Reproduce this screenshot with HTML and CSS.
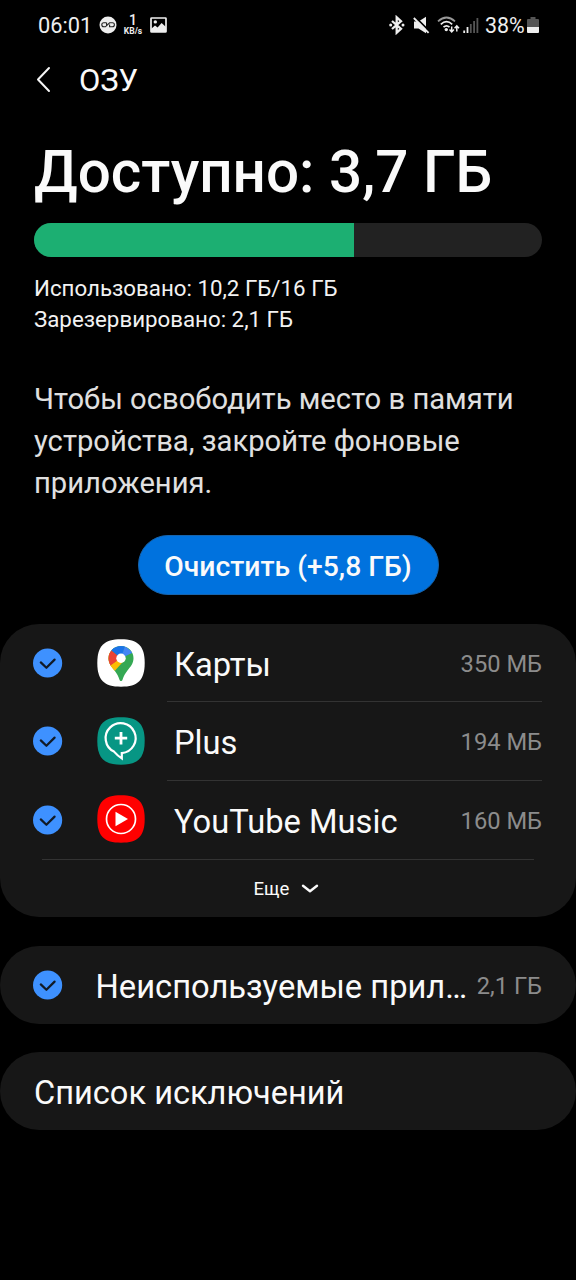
FILE: index.html
```html
<!DOCTYPE html>
<html lang="ru">
<head>
<meta charset="utf-8">
<title>ОЗУ</title>
<link rel="stylesheet" href="styles.css">
</head>
<body>
<svg class="defs" width="0" height="0">
  <symbol id="check" viewBox="0 0 30 30">
    <circle cx="14.600" cy="15" r="14.600" fill="#3e91ff"/>
    <path d="M7.800 14.400l5.600 5.400 8.200-8.200" fill="none" stroke="#111a26" stroke-width="2.200" stroke-linecap="round" stroke-linejoin="round"/>
  </symbol>
</svg>
<div class="status">
  <span class="clock">06:01</span>
  <svg class="st-badge" width="18" height="18" viewBox="0 0 18 18"><circle cx="9" cy="9" r="8.500" fill="#eee"/><g fill="none" stroke="#222" stroke-width="1.100"><path d="M7.600 6.800H4.800a2 2 0 0 0 0 4h1.600L10.600 6.800h2.800a2 2 0 0 1 0 4h-2.800V8.600M7.600 6.800v2.600"/></g></svg>
  <span class="speed"><b>1</b><small>KB/s</small></span>
  <svg class="st-pic" width="17" height="16" viewBox="0 0 17 16"><rect x="1" y="1" width="15" height="14" rx=".6" fill="none" stroke="#eee" stroke-width="1.700"/><circle cx="5.300" cy="4.900" r="1.700" fill="#eee"/><path d="M1 12l4-3.400 2.600 1.800 4-4.400L16 10v5H1z" fill="#eee"/></svg>
  <span class="grow"></span>
  <svg class="st-bt" width="16" height="20" viewBox="0 0 16 20"><path d="M3 6l9 7.800-4.300 3.900V2.300L12 6.200 3 14" fill="none" stroke="#eee" stroke-width="2.300"/><circle cx="1.700" cy="10" r="1.500" fill="#eee"/><circle cx="14" cy="10" r="1.500" fill="#eee"/></svg>
  <svg class="st-mute" width="17" height="18" viewBox="0 0 17 18"><path d="M1 5.500h4.500L13 .8v16.400l-7.500-4.700H1z" fill="#eee"/><path d="M1.800.6L17 15.800" stroke="#000" stroke-width="1.800"/><path d="M.8 2l14.800 14.800" stroke="#eee" stroke-width="1.800"/></svg>
  <svg class="st-wifi" width="23" height="18" viewBox="0 0 23 18"><g fill="none" stroke="#eee" stroke-width="1.700"><path d="M1 5.400Q9.500-2.400 18 5.400" stroke="#999"/><path d="M3.800 8.300Q9.500 3.100 15.200 8.300"/><path d="M6.500 11.200Q9.500 8.400 12.500 11.200"/></g><circle cx="9.300" cy="13.600" r="1.700" fill="#eee"/><path d="M14.700 10.500v5.300m-2.200-2.200l2.200 2.400 2.200-2.400M19.800 15.500v-5.300m-2.200 2l2.200-2.400 2.200 2.400" fill="none" stroke="#eee" stroke-width="1.500"/></svg>
  <svg class="st-sig" width="16" height="17" viewBox="0 0 16 17"><path d="M1.200 13.500V16M4.500 10v6" stroke="#eee" stroke-width="1.800"/><path d="M7.800 7v9M11.100 4v12M14.400 1v15" stroke="#555" stroke-width="1.800"/></svg>
  <span class="percent">38%</span>
  <svg class="st-bat" width="12" height="18" viewBox="0 0 12 18"><path d="M3.500 1h5v2H11a1 1 0 0 1 1 1v8H0V4a1 1 0 0 1 1-1h2.500z" fill="#555"/><path d="M0 11h12v5a1 1 0 0 1-1 1H1a1 1 0 0 1-1-1z" fill="#eee"/></svg>
</div>
<header class="bar">
  <svg width="16" height="28" viewBox="0 0 16 28"><path d="M14 2L3 13.500 14 25" fill="none" stroke="#f5f5f5" stroke-width="2" stroke-linecap="round" stroke-linejoin="round"/></svg>
  <span class="bar-title">ОЗУ</span>
</header>
<main>
  <section class="summary">
    <h1 class="headline">Доступно: 3,7 ГБ</h1>
    <div class="meter"><div class="meter-fill"></div></div>
    <p class="usage"><span class="used">Использовано: 10,2 ГБ/16 ГБ</span><br><span class="reserved">Зарезервировано: 2,1 ГБ</span></p>
    <p class="hint">Чтобы освободить место в памяти<br>устройства, закройте фоновые<br>приложения.</p>
    <button class="clean"><span>Очистить (+5,8 ГБ)</span></button>
  </section>
  <section class="card apps">
    <div class="row">
      <svg class="check" width="30" height="30"><use href="#check"/></svg>
      <svg class="app" width="48" height="48" viewBox="0 0 48 48">
        <defs><clipPath id="pin"><path d="M24 7c-7 0-12.500 5.500-12.500 12.300 0 5.200 3 8.500 6.200 12.500 2.300 3 3.700 5.600 4.700 8.600.7 2.200 2.500 2.200 3.200 0 1-3 2.400-5.600 4.700-8.600 3.200-4 6.200-7.300 6.200-12.500C36.500 12.500 31 7 24 7z"/></clipPath></defs>
        <path d="M24 .3C41 .3 47.700 7 47.700 24S41 47.700 24 47.700.3 41 .3 24 7 .3 24 .3z" fill="#fff"/>
        <g clip-path="url(#pin)">
          <path d="M8 5h32v40H8z" fill="#34a853"/>
          <path d="M24 19.200L8 11v30l7.500-10.500 12.500-15z" fill="#fbbc04"/>
          <path d="M8 8l6.300 3.200L24 19.200 12.500 27.500 8 28z" fill="#ea4335"/>
          <path d="M24 19.200L11.800 27.800 14 36l14.500-16z" fill="#fbbc04"/>
          <path d="M24 19.200L14.300 11.200 12 4h18l-2 4z" fill="#1a73e8"/>
          <path d="M24 19.200L28 7l8 6.500z" fill="#4285f4"/>
        </g>
        <circle cx="24" cy="19.200" r="4.700" fill="#fff"/>
      </svg>
      <div class="row-body"><span class="name">Карты</span><span class="size">350 МБ</span></div>
    </div>
    <div class="row">
      <svg class="check" width="30" height="30"><use href="#check"/></svg>
      <svg class="app" width="48" height="48" viewBox="0 0 48 48"><path d="M24 .3C41 .3 47.700 7 47.700 24S41 47.700 24 47.700.3 41 .3 24 7 .3 24 .3z" fill="#079684"/><path d="M17 34.600A15 15 0 1 1 24.800 36.100V41.400Q20.500 38.600 17 34.600z" fill="none" stroke="#fff" stroke-width="2.200"/><path d="M24 15v12.400M17.800 21.200h12.400" stroke="#fff" stroke-width="2.800"/></svg>
      <div class="row-body"><span class="name">Plus</span><span class="size">194 МБ</span></div>
    </div>
    <div class="row">
      <svg class="check" width="30" height="30"><use href="#check"/></svg>
      <svg class="app" width="48" height="48" viewBox="0 0 48 48"><path d="M24 .3C41 .3 47.700 7 47.700 24S41 47.700 24 47.700.3 41 .3 24 7 .3 24 .3z" fill="#f00"/><circle cx="24" cy="24" r="14.500" fill="none" stroke="#fff" stroke-width="1.700"/><path d="M18.500 16.800v14.400L31 24z" fill="#fff"/></svg>
      <div class="row-body last"><span class="name">YouTube Music</span><span class="size">160 МБ</span></div>
    </div>
    <div class="more"><span>Еще</span><svg width="18" height="12" viewBox="0 0 18 12"><path d="M2 2.800L9 8.200l7-5.400" fill="none" stroke="#fafafa" stroke-width="2.400" stroke-linecap="round" stroke-linejoin="round"/></svg></div>
  </section>
  <section class="card single">
    <svg class="check" width="30" height="30"><use href="#check"/></svg>
    <span class="name unused">Неиспользуемые прил…</span><span class="size">2,1 ГБ</span>
  </section>
  <section class="card single"><span class="name exclusions">Список исключений</span></section>
</main>
</body>
</html>
```
FILE: styles.css
```css
* { box-sizing: border-box; }
body {
  margin: 0;
  width: 576px;
  height: 1280px;
  overflow: hidden;
  background: #000;
  color: #fafafa;
  font-family: Roboto, "Noto Sans", sans-serif;
}
h1, p { margin: 0; }
svg { display: block; flex: none; }
.defs { position: absolute; }
.grow { flex: 1; }

.status {
  display: flex;
  align-items: center;
  height: 50px;
  padding: 0 37px 0 38px;
  color: #eee;
  font-size: 21.8px;
  white-space: nowrap;
}
.clock { width: 61px; }
.speed {
  display: flex;
  flex-direction: column;
  align-items: center;
  width: 20px;
  margin: 0 7px 0 6px;
}
.speed b { font-size: 14px; line-height: 13px; font-weight: 500; }
.speed small { font-size: 8.5px; line-height: 9px; font-weight: 700; }
.st-mute { margin-left: 8px; }
.st-wifi { margin-left: 7px; }
.st-sig { margin-left: 3px; }
.percent { width: 42px; margin-left: 6px; font-size: 21.4px; }

.bar {
  display: flex;
  align-items: center;
  height: 60px;
  padding-left: 35px;
}
.bar-title { margin-left: 28px; font-size: 31px; }

.summary {
  display: flex;
  flex-direction: column;
  height: 514px;
  padding: 25px 34px 0;
}
.headline {
  height: 88px;
  font-size: 58.4px;
  line-height: 75px;
  font-weight: 500;
  white-space: nowrap;
}
.meter {
  height: 34px;
  border-radius: 17px;
  background: #222;
  overflow: hidden;
}
.meter-fill { width: 320px; height: 34px; background: #1caf72; }
.usage {
  margin-top: 16px;
  font-size: 22.3px;
  line-height: 30.5px;
  color: #f2f2f2;
  white-space: nowrap;
}
.hint {
  margin-top: 45.4px;
  font-size: 29.2px;
  line-height: 41.7px;
  color: #e0e0e0;
  white-space: nowrap;
}
.clean {
  align-self: center;
  width: 301px;
  height: 60px;
  margin-top: 30.6px;
  padding: 3px 0 0;
  border: 1px solid #1764ad;
  border-radius: 30px;
  background: #0072de;
  color: #fafafa;
  font: 500 28.3px/56px Roboto, "Noto Sans", sans-serif;
  white-space: nowrap;
}

.card { background: #171717; border-radius: 39px; }
.apps { height: 293px; }
.row {
  display: flex;
  height: 78px;
  padding: 0 34px 0 33px;
}
.row + .row { height: 78.5px; }
.row .check { margin-top: 24px; }
.app { margin: 14.6px 22.4px 0 33.6px; }
.row-body {
  display: flex;
  flex: 1;
  align-items: center;
  padding: 3px 0 0 7px;
  border-bottom: 1px solid #333;
}
.row-body.last { border-bottom-color: transparent; }
.name { flex: 1; font-size: 32.7px; white-space: nowrap; }
.row .name { padding-top: 2px; }
.size { font-size: 23.7px; color: #8c8c8c; white-space: nowrap; }
.more {
  display: flex;
  justify-content: center;
  align-items: center;
  gap: 12px;
  height: 58px;
  margin: 0 42px;
  padding-right: 3px;
  border-top: 1px solid #333;
  font-size: 18.6px;
}
.single {
  display: flex;
  align-items: center;
  height: 78px;
  margin-top: 29px;
  padding: 0 34px 0 33px;
}
.single + .single { margin-top: 28px; }
.single .size { padding-top: 2px; }
.unused { margin-left: 32.5px; padding-top: 4px; }
.exclusions { padding: 4px 0 0 1px; font-size: 32.6px; }
```
